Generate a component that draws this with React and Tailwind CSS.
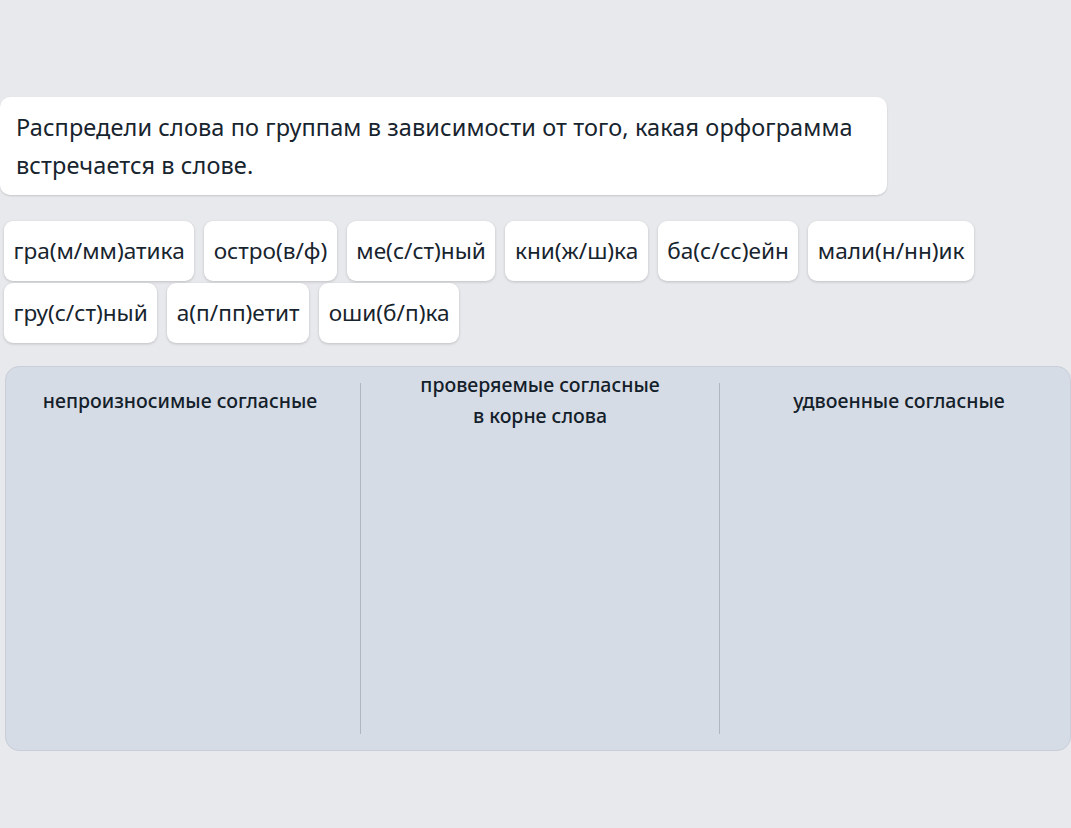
const words = [
  'гра(м/мм)атика',
  'остро(в/ф)',
  'ме(с/ст)ный',
  'кни(ж/ш)ка',
  'ба(с/сс)ейн',
  'мали(н/нн)ик',
  'гру(с/ст)ный',
  'а(п/пп)етит',
  'оши(б/п)ка',
];

const groups = [
  { lines: ['непроизносимые согласные'], pad: 'pr-[6px]' },
  { lines: ['проверяемые согласные', 'в корне слова'], pad: '' },
  { lines: ['удвоенные согласные'], pad: 'pl-[8px]' },
];

export default function App() {
  return (
    <div
      className="min-h-[828px] w-full overflow-hidden bg-[#e8e9ed] pt-[97px] text-[#17242e]"
      style={{ fontFamily: '"Noto Sans", "Open Sans", sans-serif' }}
    >
      <div className="w-[887px] rounded-[10px] bg-white px-4 py-[11px] text-[23.5px] leading-[38px] tracking-[0.1px] shadow-[0_1px_2px_rgba(0,0,0,0.15)]">
        Распредели слова по группам в зависимости от того, какая орфограмма встречается в слове.
      </div>

      <div className="mt-[26px] flex flex-wrap gap-x-[10px] gap-y-[2px] pl-1 pr-[80px]">
        {words.map((w) => (
          <div
            key={w}
            className="flex h-[60px] items-center rounded-[9px] bg-white px-[9.5px] text-[22.6px] shadow-[0_1px_3px_rgba(0,0,0,0.18)]"
          >
            {w}
          </div>
        ))}
      </div>

      <div className="ml-[5px] mt-[23px] grid h-[385px] grid-cols-[355px_359px_1fr] rounded-[14px] border border-[#c9ced8] bg-[#d6dce5] py-4">
        {groups.map((g, i) => (
          <div
            key={i}
            className={
              'flex h-[351px] flex-col items-start ' +
              (i < 2 ? 'border-r border-[#aeb6c2]' : '')
            }
          >
            <div
              className={
                '-mt-[14px] flex h-[62px] w-full flex-col items-center justify-center text-[19.5px] font-medium leading-[31px] text-[#13202a] ' +
                g.pad
              }
            >
              {g.lines.map((l) => (
                <span key={l}>{l}</span>
              ))}
            </div>
          </div>
        ))}
      </div>
    </div>
  );
}
